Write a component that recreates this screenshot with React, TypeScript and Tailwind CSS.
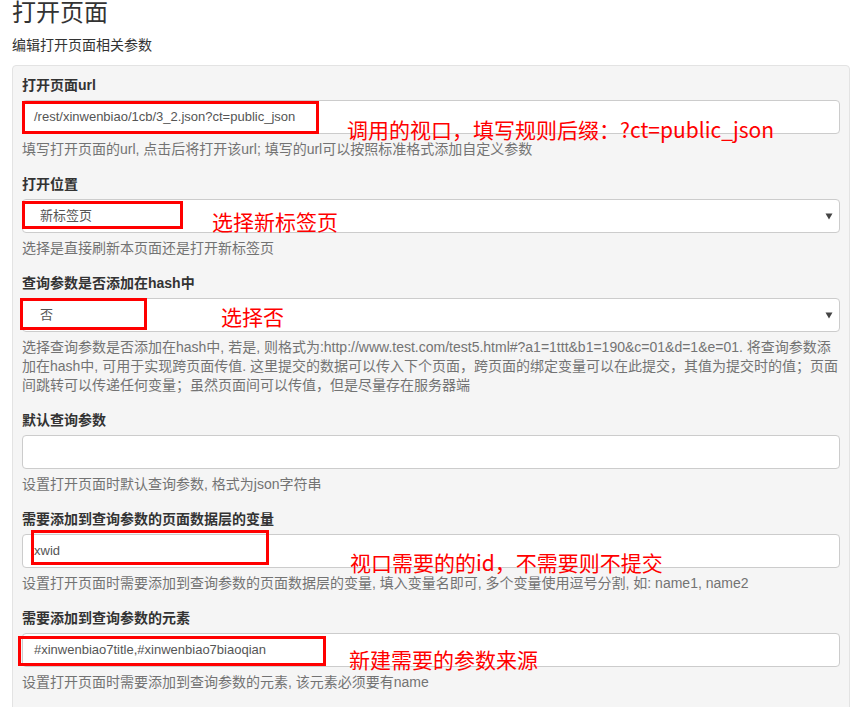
import React from "react";

const base = { fontFamily: '"Liberation Sans", "Noto Sans CJK SC", sans-serif' };
const anno = { fontFamily: '"Noto Sans CJK SC", "Liberation Sans", sans-serif' };

function Arrow() {
  return (
    <svg width="8" height="7" viewBox="0 0 8 7" className="absolute right-[6px] top-[13px]">
      <path d="M0.5 0.5 L7.5 0.5 L4 6.5 Z" fill="#444" />
    </svg>
  );
}

function Box({ l, t, w, h }: { l: number; t: number; w: number; h: number }) {
  return (
    <div
      className="absolute border-[3px] border-[#ff0000] pointer-events-none"
      style={{ left: l, top: t, width: w, height: h }}
    />
  );
}

function Note({ l, t, text }: { l: number; t: number; text: string }) {
  return (
    <div
      className="absolute text-[21px] leading-[25px] text-[#ff0000] whitespace-nowrap"
      style={{ ...anno, left: l, top: t }}
    >
      {text}
    </div>
  );
}

function Group({
  label,
  value,
  select,
  help,
  children,
  padLeft = 12,
}: {
  label: string;
  value?: string;
  select?: boolean;
  help: string;
  children?: React.ReactNode;
  padLeft?: number;
}) {
  return (
    <div className="flex flex-col mb-[15px]">
      <div className="text-[14px] leading-[20px] font-bold text-[#333] mb-[5px]">{label}</div>
      <div className="relative">
        <div
          className="relative h-[34px] bg-white border border-[#ccc] rounded-[4px] flex items-center text-[13px] text-[#555]"
          style={{ paddingLeft: padLeft - 1 }}
        >
          {value}
          {select && <Arrow />}
        </div>
        {children}
      </div>
      <div className="mt-[6px] text-[14px] leading-[19px] text-[#737373]">{help}</div>
    </div>
  );
}

export default function App() {
  return (
    <div className="w-[867px] h-[707px] overflow-hidden bg-white" style={base}>
      <div className="flex flex-col pl-[12px]">
        <div className="text-[24px] leading-[26px] text-[#333]">打开页面</div>
        <div className="mt-[9px] text-[14px] leading-[20px] text-[#333]">编辑打开页面相关参数</div>
        <div className="mt-[10px] w-[838px] flex flex-col bg-[#f5f5f5] border border-[#e3e3e3] rounded-[4px] pt-[9px] px-[9px] pb-[20px]">
          <Group
            label="打开页面url"
            value="/rest/xinwenbiao/1cb/3_2.json?ct=public_json"
            help="填写打开页面的url, 点击后将打开该url; 填写的url可以按照标准格式添加自定义参数"
          >
            <Box l={0} t={1} w={297} h={33} />
            <Note l={325} t={17} text="调用的视口，填写规则后缀：?ct=public_json" />
          </Group>
          <Group label="打开位置" value="新标签页" select padLeft={18} help="选择是直接刷新本页面还是打开新标签页">
            <Box l={0} t={2} w={161} h={28} />
            <Note l={190} t={10} text="选择新标签页" />
          </Group>
          <Group
            label="查询参数是否添加在hash中"
            value="否"
            select
            padLeft={18}
            help="选择查询参数是否添加在hash中, 若是, 则格式为:http://www.test.com/test5.html#?a1=1ttt&b1=190&c=01&d=1&e=01. 将查询参数添加在hash中, 可用于实现跨页面传值. 这里提交的数据可以传入下个页面，跨页面的绑定变量可以在此提交，其值为提交时的值；页面间跳转可以传递任何变量；虽然页面间可以传值，但是尽量存在服务器端"
          >
            <Box l={-2} t={0} w={127} h={32} />
            <Note l={199} t={6} text="选择否" />
          </Group>
          <Group label="默认查询参数" value="" help="设置打开页面时默认查询参数, 格式为json字符串" />
          <Group
            label="需要添加到查询参数的页面数据层的变量"
            value="xwid"
            help="设置打开页面时需要添加到查询参数的页面数据层的变量, 填入变量名即可, 多个变量使用逗号分割, 如: name1, name2"
          >
            <Box l={9} t={-4} w={238} h={35} />
            <Note l={328} t={16} text="视口需要的的id，不需要则不提交" />
          </Group>
          <Group
            label="需要添加到查询参数的元素"
            value="#xinwenbiao7title,#xinwenbiao7biaoqian"
            help="设置打开页面时需要添加到查询参数的元素, 该元素必须要有name"
          >
            <Box l={-4} t={3} w={308} h={30} />
            <Note l={327} t={14} text="新建需要的参数来源" />
          </Group>
        </div>
      </div>
    </div>
  );
}
